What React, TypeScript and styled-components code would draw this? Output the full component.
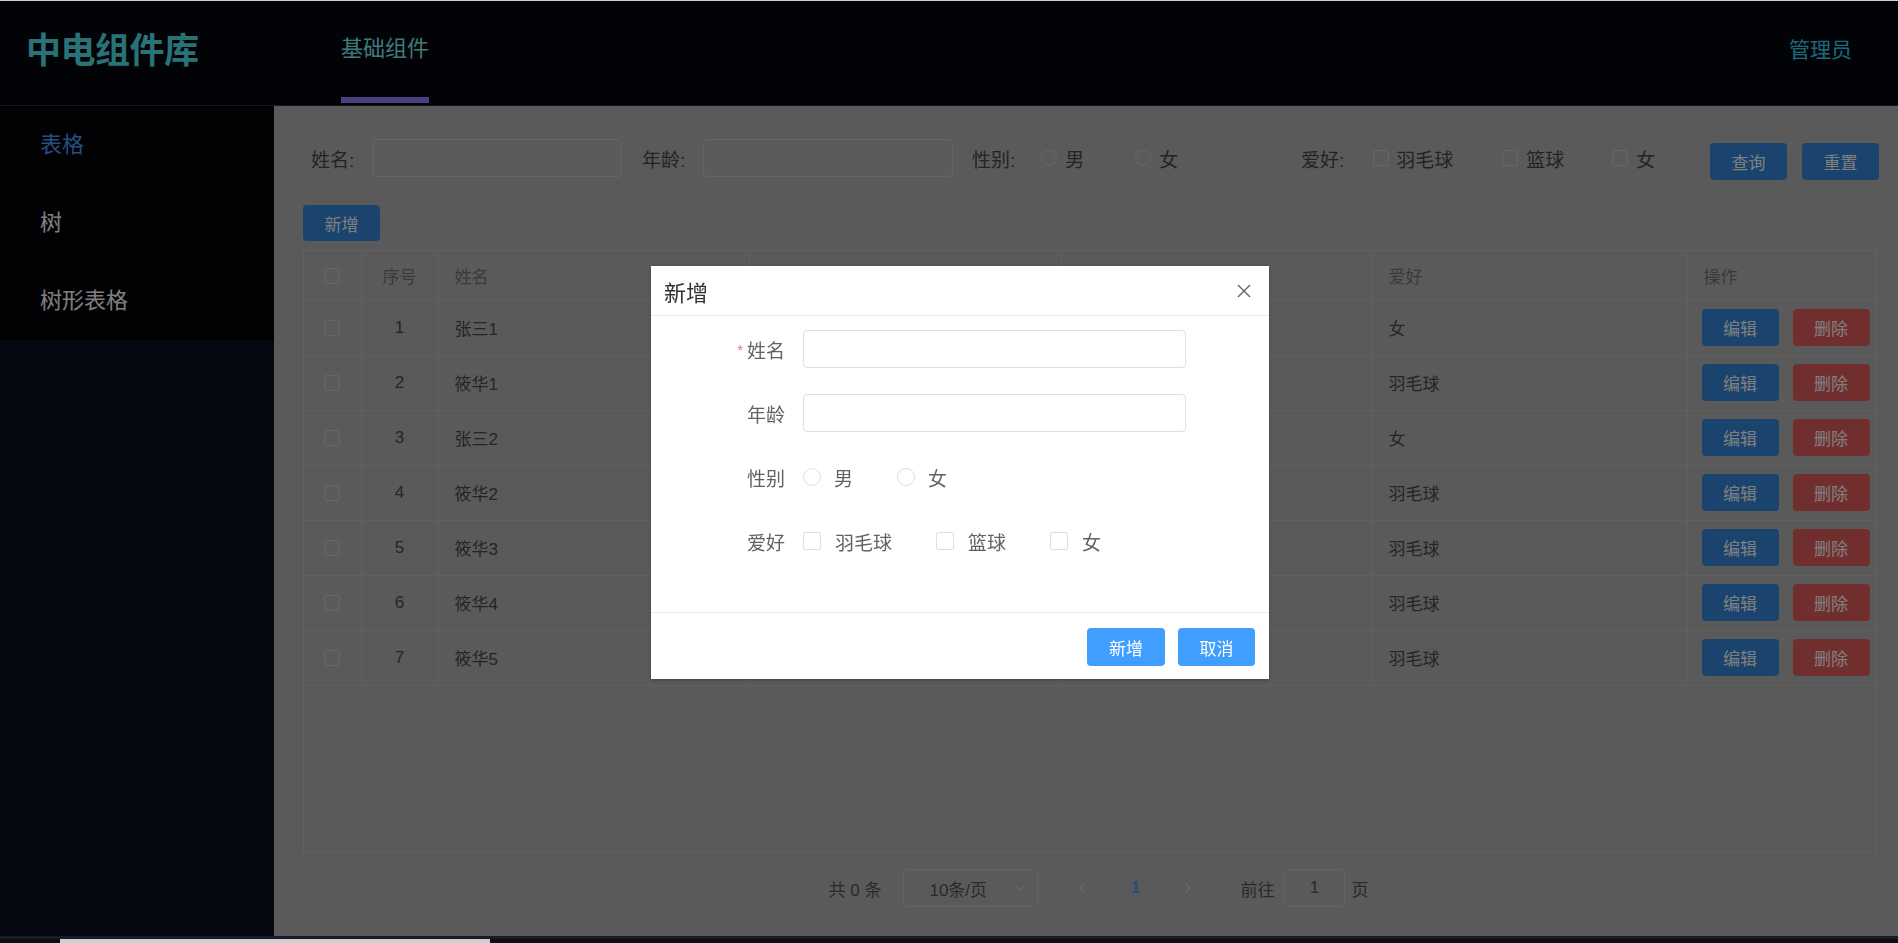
import React from 'react';
import styled, { createGlobalStyle, css } from 'styled-components';
import { ChevronDown, ChevronLeft, ChevronRight } from 'lucide-react';

const GlobalStyle = createGlobalStyle`
  html, body {
    margin: 0;
    padding: 0;
    height: 100%;
  }
  body {
    font-family: "Liberation Sans", "Noto Sans CJK SC", sans-serif;
    background: #b4b4b4;
    overflow: hidden;
  }
  * {
    box-sizing: border-box;
  }
`;

const Page = styled.div`
  display: flex;
  flex-direction: column;
  height: 100vh;
  border-top: 1px solid #cfcfcf;
`;

const TopBar = styled.header`
  display: flex;
  align-items: flex-start;
  height: 105px;
  flex-shrink: 0;
  background: #05070f;
  border-bottom: 1px solid #2a3142;
`;

const Logo = styled.div`
  width: 274px;
  padding-left: 26px;
  font-size: 35px;
  font-weight: bold;
  line-height: 100px;
  color: #52e6ee;
  letter-spacing: -0.5px;
`;

const Nav = styled.nav`
  display: flex;
  padding-left: 67px;
  flex: 1;
`;

const NavItem = styled.div<{ $active?: boolean }>`
  font-size: 22px;
  line-height: 96px;
  color: #82f2f0;
  border-bottom: 6px solid ${(p) => (p.$active ? '#9683ff' : 'transparent')};
`;

const User = styled.div`
  padding-right: 46px;
  font-size: 21px;
  line-height: 98px;
  color: #3fd0f5;
`;

const Body = styled.div`
  display: flex;
  flex: 1;
  min-height: 0;
`;

const Sidebar = styled.aside`
  width: 274px;
  flex-shrink: 0;
  background: #0b1020;
`;

const Menu = styled.ul`
  margin: 0;
  padding: 0;
  list-style: none;
  background: #040509;
`;

const MenuItem = styled.li<{ $active?: boolean }>`
  height: 78px;
  line-height: 78px;
  padding-left: 40px;
  font-size: 22px;
  color: ${(p) => (p.$active ? '#4a9cff' : '#ffffff')};
`;

const Main = styled.main`
  flex: 1;
  display: flex;
  flex-direction: column;
  padding: 33px 22px 0 29px;
  background: #b4b4b4;
`;

const SearchBar = styled.div`
  display: flex;
  align-items: center;
  height: 38px;
  padding-left: 8px;
`;

const Field = styled.div<{ $width?: number }>`
  display: flex;
  align-items: center;
  width: ${(p) => (p.$width ? `${p.$width}px` : 'auto')};
  flex-shrink: 0;
`;

const FieldLabel = styled.span`
  font-size: 19px;
  color: #474747;
  margin-right: 18px;
  white-space: nowrap;
`;

const TextInput = styled.div<{ $width: number }>`
  width: ${(p) => p.$width}px;
  height: 38px;
  border: 1px solid #cacaca;
  border-radius: 4px;
  background: #b6b6b6;
`;

const Choices = styled.div<{ $offset?: number }>`
  display: flex;
  align-items: center;
  margin-left: ${(p) => p.$offset ?? 0}px;
`;

const Choice = styled.label<{ $gap: number; $space: number; $size: number; $color: string }>`
  display: inline-flex;
  align-items: center;
  gap: ${(p) => p.$gap}px;
  margin-right: ${(p) => p.$space}px;
  font-size: ${(p) => p.$size}px;
  color: ${(p) => p.$color};
  white-space: nowrap;
`;

const Mark = styled.span<{ $round?: boolean; $size: number; $border: string; $bg: string }>`
  display: inline-block;
  width: ${(p) => p.$size}px;
  height: ${(p) => p.$size}px;
  border: 1px solid ${(p) => p.$border};
  border-radius: ${(p) => (p.$round ? '50%' : '2px')};
  background: ${(p) => p.$bg};
  flex-shrink: 0;
`;

const ActionGroup = styled.div`
  display: flex;
  gap: 15px;
  margin-left: auto;
  margin-right: -3px;
  margin-top: 6px;
`;

const Btn = styled.button<{ $variant?: 'primary' | 'danger' | 'bright'; $w?: number; $h?: number }>`
  width: ${(p) => p.$w ?? 77}px;
  height: ${(p) => p.$h ?? 37}px;
  flex-shrink: 0;
  border: none;
  border-radius: 4px;
  font-family: inherit;
  font-size: 17px;
  color: #fff;
  cursor: pointer;
  ${(p) =>
    p.$variant === 'danger'
      ? css`
          background: #e25c5c;
        `
      : p.$variant === 'bright'
      ? css`
          background: #409eff;
        `
      : css`
          background: #3487dc;
        `}
`;

const Toolbar = styled.div`
  margin-top: 28px;
  display: flex;
`;

const TableBox = styled.div`
  margin-top: 9px;
  height: 603px;
  border: 1px solid #c4c4c4;
  flex-shrink: 0;
`;

const Grid = styled.table`
  width: 100%;
  border-collapse: collapse;
  table-layout: fixed;
`;

const Th = styled.th<{ $align?: string }>`
  height: 49px;
  padding: 0 16px;
  text-align: ${(p) => p.$align ?? 'left'};
  font-weight: normal;
  font-size: 17px;
  color: #757575;
  border-right: 1px solid #c0c0c0;
  border-bottom: 1px solid #c0c0c0;
  &:last-child {
    border-right: none;
  }
`;

const Td = styled.td<{ $align?: string; $pad?: string }>`
  height: 55px;
  padding: ${(p) => p.$pad ?? '0 16px'};
  text-align: ${(p) => p.$align ?? 'left'};
  font-size: 17px;
  color: #4a4a4a;
  border-right: 1px solid #c0c0c0;
  border-bottom: 1px solid #c0c0c0;
  &:last-child {
    border-right: none;
  }
`;

const CellButtons = styled.div`
  display: flex;
  gap: 14px;
`;

const Pagination = styled.div`
  display: flex;
  align-items: center;
  justify-content: center;
  margin-top: 16px;
  padding-left: 18px;
  height: 38px;
  font-size: 17px;
  color: #555;
`;

const Select = styled.div`
  display: flex;
  align-items: center;
  justify-content: space-between;
  width: 135px;
  height: 38px;
  margin-left: 22px;
  padding: 0 10px 0 25px;
  border: 1px solid #c6c6c6;
  border-radius: 4px;
  color: #555;
`;

const Pager = styled.div`
  display: flex;
  gap: 17px;
  margin-left: 26px;
`;

const PageBtn = styled.div<{ $active?: boolean }>`
  width: 36px;
  height: 38px;
  display: flex;
  align-items: center;
  justify-content: center;
  font-weight: ${(p) => (p.$active ? 'bold' : 'normal')};
  color: ${(p) => (p.$active ? '#409eff' : '#e6e6e6')};
`;

const Jumper = styled.div`
  display: flex;
  align-items: center;
  margin-left: 34px;
`;

const JumpInput = styled.div`
  width: 62px;
  height: 38px;
  margin: 0 6px 0 9px;
  border: 1px solid #c6c6c6;
  border-radius: 4px;
  display: flex;
  align-items: center;
  justify-content: center;
`;

const Mask = styled.div`
  position: fixed;
  top: 1px;
  left: 0;
  right: 0;
  bottom: 0;
  background: rgba(0, 0, 0, 0.5);
  z-index: 10;
`;

const Dialog = styled.div`
  position: fixed;
  top: 266px;
  left: 651px;
  width: 618px;
  background: #fff;
  z-index: 11;
  box-shadow: 0 1px 3px rgba(0, 0, 0, 0.3);
`;

const DialogHeader = styled.div`
  display: flex;
  align-items: center;
  justify-content: space-between;
  height: 50px;
  padding: 0 17px 0 13px;
  border-bottom: 1px solid #ebeef5;
`;

const DialogTitle = styled.span`
  font-size: 22px;
  color: #303133;
`;

const DialogBody = styled.div`
  display: flex;
  flex-direction: column;
  gap: 26px;
  padding: 14px 20px 52px;
`;

const FormRow = styled.div`
  display: grid;
  grid-template-columns: 132px 1fr;
  align-items: center;
  height: 38px;
`;

const FormLabel = styled.label`
  text-align: right;
  padding-right: 18px;
  font-size: 19px;
  color: #606266;
`;

const Required = styled.span`
  color: #f56c6c;
  font-size: 15px;
  margin-right: 4px;
  vertical-align: 3px;
`;

const DialogInput = styled.input`
  width: 383px;
  height: 38px;
  border: 1px solid #dcdfe6;
  border-radius: 4px;
  outline: none;
  padding: 0 14px;
  font-family: inherit;
  font-size: 17px;
`;

const DialogFooter = styled.div`
  display: flex;
  justify-content: flex-end;
  gap: 13px;
  padding: 15px 14px 13px;
  border-top: 1px solid #ebeef5;
`;

const ScrollStrip = styled.div`
  position: fixed;
  left: 0;
  right: 0;
  bottom: 0;
  height: 7px;
  background: #0c0e14;
  border-top: 3px solid #171b25;
  z-index: 12;
`;

const ScrollThumb = styled.div`
  margin-left: 60px;
  width: 430px;
  height: 4px;
  background: #cfcfcf;
`;

// 年龄 / 性别 cells sit under the open dialog, so they are left blank here
const rows = [
  { id: 1, name: '张三1', hobby: '女' },
  { id: 2, name: '筱华1', hobby: '羽毛球' },
  { id: 3, name: '张三2', hobby: '女' },
  { id: 4, name: '筱华2', hobby: '羽毛球' },
  { id: 5, name: '筱华3', hobby: '羽毛球' },
  { id: 6, name: '筱华4', hobby: '羽毛球' },
  { id: 7, name: '筱华5', hobby: '羽毛球' },
];

const pageMark = { $size: 16, $border: '#cdcdcd', $bg: '#b6b6b6' };
const dialogMark = { $size: 18, $border: '#dcdfe6', $bg: '#fff' };

const CloseIcon = () => (
  <svg width="16" height="16" viewBox="0 0 16 16">
    <path d="M2 2 L14 14 M14 2 L2 14" stroke="#606266" strokeWidth="1.4" fill="none" />
  </svg>
);

const App: React.FC = () => {
  return (
    <>
      <GlobalStyle />
      <Page>
        <TopBar>
          <Logo>中电组件库</Logo>
          <Nav>
            <NavItem $active>基础组件</NavItem>
          </Nav>
          <User>管理员</User>
        </TopBar>
        <Body>
          <Sidebar>
            <Menu>
              <MenuItem $active>表格</MenuItem>
              <MenuItem>树</MenuItem>
              <MenuItem>树形表格</MenuItem>
            </Menu>
          </Sidebar>
          <Main>
            <SearchBar>
              <Field $width={331}>
                <FieldLabel>姓名:</FieldLabel>
                <TextInput $width={250} />
              </Field>
              <Field $width={330}>
                <FieldLabel>年龄:</FieldLabel>
                <TextInput $width={250} />
              </Field>
              <Field $width={329}>
                <FieldLabel>性别:</FieldLabel>
                <Choices $offset={8}>
                  <Choice $gap={8} $space={51} $size={19} $color="#474747">
                    <Mark $round {...pageMark} />男
                  </Choice>
                  <Choice $gap={8} $space={51} $size={19} $color="#474747">
                    <Mark $round {...pageMark} />女
                  </Choice>
                </Choices>
              </Field>
              <Field>
                <FieldLabel>爱好:</FieldLabel>
                <Choices $offset={11}>
                  <Choice $gap={7} $space={49} $size={19} $color="#474747">
                    <Mark {...pageMark} />羽毛球
                  </Choice>
                  <Choice $gap={8} $space={48} $size={19} $color="#474747">
                    <Mark {...pageMark} />篮球
                  </Choice>
                  <Choice $gap={8} $space={0} $size={19} $color="#474747">
                    <Mark {...pageMark} />女
                  </Choice>
                </Choices>
              </Field>
              <ActionGroup>
                <Btn>查询</Btn>
                <Btn>重置</Btn>
              </ActionGroup>
            </SearchBar>

            <Toolbar>
              <Btn $h={36}>新增</Btn>
            </Toolbar>

            <TableBox>
              <Grid>
                <colgroup>
                  <col style={{ width: 57 }} />
                  <col style={{ width: 77 }} />
                  <col style={{ width: 311 }} />
                  <col style={{ width: 312 }} />
                  <col style={{ width: 311 }} />
                  <col style={{ width: 315 }} />
                  <col />
                </colgroup>
                <thead>
                  <tr>
                    <Th $align="center">
                      <Mark {...pageMark} style={{ verticalAlign: 'middle' }} />
                    </Th>
                    <Th $align="center">序号</Th>
                    <Th>姓名</Th>
                    <Th>年龄</Th>
                    <Th>性别</Th>
                    <Th>爱好</Th>
                    <Th>操作</Th>
                  </tr>
                </thead>
                <tbody>
                  {rows.map((r) => (
                    <tr key={r.id}>
                      <Td $align="center">
                        <Mark {...pageMark} style={{ verticalAlign: 'middle' }} />
                      </Td>
                      <Td $align="center">{r.id}</Td>
                      <Td>{r.name}</Td>
                      <Td />
                      <Td />
                      <Td>{r.hobby}</Td>
                      <Td $pad="0 0 0 14px">
                        <CellButtons>
                          <Btn>编辑</Btn>
                          <Btn $variant="danger">删除</Btn>
                        </CellButtons>
                      </Td>
                    </tr>
                  ))}
                </tbody>
              </Grid>
            </TableBox>

            <Pagination>
              <span>共 0 条</span>
              <Select>
                <span>10条/页</span>
                <ChevronDown size={15} color="#e0e0e0" strokeWidth={1.5} />
              </Select>
              <Pager>
                <PageBtn>
                  <ChevronLeft size={16} strokeWidth={1.5} />
                </PageBtn>
                <PageBtn $active>1</PageBtn>
                <PageBtn>
                  <ChevronRight size={16} strokeWidth={1.5} />
                </PageBtn>
              </Pager>
              <Jumper>
                <span>前往</span>
                <JumpInput>1</JumpInput>
                <span>页</span>
              </Jumper>
            </Pagination>
          </Main>
        </Body>
      </Page>

      <Mask />

      <Dialog>
        <DialogHeader>
          <DialogTitle>新增</DialogTitle>
          <CloseIcon />
        </DialogHeader>
        <DialogBody>
          <FormRow>
            <FormLabel>
              <Required>*</Required>姓名
            </FormLabel>
            <DialogInput />
          </FormRow>
          <FormRow>
            <FormLabel>年龄</FormLabel>
            <DialogInput />
          </FormRow>
          <FormRow>
            <FormLabel>性别</FormLabel>
            <Choices>
              <Choice $gap={13} $space={44} $size={19} $color="#606266">
                <Mark $round {...dialogMark} />男
              </Choice>
              <Choice $gap={13} $space={44} $size={19} $color="#606266">
                <Mark $round {...dialogMark} />女
              </Choice>
            </Choices>
          </FormRow>
          <FormRow>
            <FormLabel>爱好</FormLabel>
            <Choices>
              <Choice $gap={14} $space={44} $size={19} $color="#606266">
                <Mark {...dialogMark} />羽毛球
              </Choice>
              <Choice $gap={14} $space={44} $size={19} $color="#606266">
                <Mark {...dialogMark} />篮球
              </Choice>
              <Choice $gap={14} $space={0} $size={19} $color="#606266">
                <Mark {...dialogMark} />女
              </Choice>
            </Choices>
          </FormRow>
        </DialogBody>
        <DialogFooter>
          <Btn $variant="bright" $w={78} $h={38}>新增</Btn>
          <Btn $variant="bright" $w={77} $h={38}>取消</Btn>
        </DialogFooter>
      </Dialog>

      <ScrollStrip>
        <ScrollThumb />
      </ScrollStrip>
    </>
  );
};

export default App;
